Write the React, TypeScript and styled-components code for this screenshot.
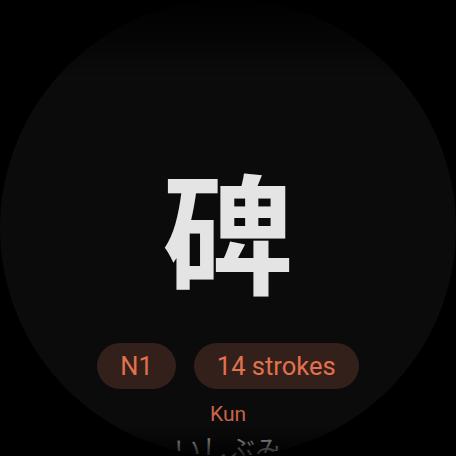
import styled, { createGlobalStyle } from "styled-components";

const GlobalStyle = createGlobalStyle`
  html, body {
    margin: 0;
    padding: 0;
    background: #000;
  }
`;

export default function App() {
  return (
    <>
      <GlobalStyle />
      <Screen>
        <Content>
          <Kanji>碑</Kanji>
          <ChipRow>
            <Chip>N1</Chip>
            <Chip>14 strokes</Chip>
          </ChipRow>
          <SectionLabel>Kun</SectionLabel>
          <Reading>いしぶみ</Reading>
        </Content>
        <Fade />
      </Screen>
    </>
  );
}

const Screen = styled.div`
  position: relative;
  width: 456px;
  height: 456px;
  border-radius: 50%;
  overflow: hidden;
  background: #0b0b0b;
`;

const Content = styled.div`
  display: flex;
  flex-direction: column;
  align-items: center;
  padding-top: 157px;
  font-family: Roboto, "Noto Sans CJK JP", sans-serif;
`;

const Kanji = styled.div`
  font-family: "Noto Sans CJK JP", sans-serif;
  font-weight: 700;
  font-size: 130px;
  line-height: 140px;
  color: #e4e4e4;
`;

const ChipRow = styled.div`
  display: flex;
  gap: 18px;
  margin-top: 46px;
`;

const Chip = styled.div`
  height: 46px;
  padding: 0 23px;
  border-radius: 23px;
  background: #33201a;
  color: #e2714f;
  font-size: 25.5px;
  display: flex;
  align-items: center;
`;

const SectionLabel = styled.div`
  margin-top: 12px;
  font-size: 21px;
  line-height: 26px;
  color: #c8644a;
`;

const Reading = styled.div`
  margin-top: 4px;
  font-family: "Noto Sans CJK JP", sans-serif;
  font-size: 27px;
  line-height: 36px;
  color: #bdbdbd;
`;

const Fade = styled.div`
  position: absolute;
  inset: 0;
  pointer-events: none;
  background: linear-gradient(
    to bottom,
    rgba(0, 0, 0, 0.95) 0px,
    rgba(0, 0, 0, 0) 80px,
    rgba(0, 0, 0, 0) 425px,
    rgba(0, 0, 0, 0.85) 456px
  );
`;
